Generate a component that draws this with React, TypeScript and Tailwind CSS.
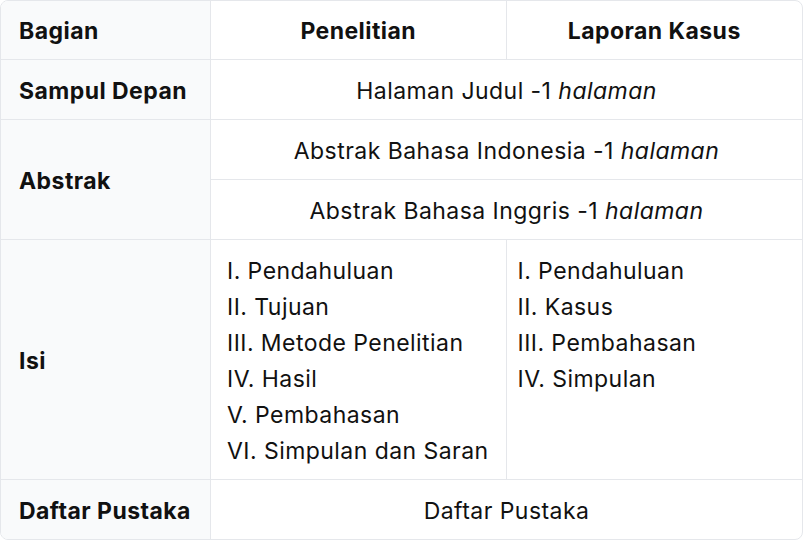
export default function App() {
  const penelitian = [
    "I. Pendahuluan",
    "II. Tujuan",
    "III. Metode Penelitian",
    "IV. Hasil",
    "V. Pembahasan",
    "VI. Simpulan dan Saran",
  ];
  const kasus = ["I. Pendahuluan", "II. Kasus", "III. Pembahasan", "IV. Simpulan"];

  const head = "bg-[#f9fafb] font-bold px-[18px] pt-[2px] flex items-center border-r border-b border-[#e5e7eb]";
  const cell = "border-b border-[#e5e7eb] flex items-center justify-center h-[60px] pt-[2px]";

  return (
    <div
      className="w-[803px] h-[540px] bg-white text-[23px] leading-[36px] tracking-[0.45px] text-[#111111]"
      style={{ fontFamily: "Inter, 'Noto Sans', sans-serif" }}
    >
      <div className="h-full border border-[#e5e7eb] rounded-lg overflow-hidden grid grid-cols-[210px_1fr_1fr] grid-rows-[59px_60px_120px_240px_1fr]">
        {/* HEADER */}
        <div className={head}>Bagian</div>
        <div className="border-r border-b border-[#e5e7eb] font-bold pt-[2px] flex items-center justify-center">
          Penelitian
        </div>
        <div className="border-b border-[#e5e7eb] font-bold pt-[2px] flex items-center justify-center">
          Laporan Kasus
        </div>

        {/* SAMPUL */}
        <div className={head}>Sampul Depan</div>
        <div className={`${cell} col-span-2`}>
          Halaman Judul -1&nbsp;<em>halaman</em>
        </div>

        {/* ABSTRAK */}
        <div className={head}>Abstrak</div>
        <div className="col-span-2 flex flex-col">
          <div className={cell}>
            Abstrak Bahasa Indonesia -1&nbsp;<em>halaman</em>
          </div>
          <div className={cell}>
            Abstrak Bahasa Inggris -1&nbsp;<em>halaman</em>
          </div>
        </div>

        {/* ISI */}
        <div className={head}>Isi</div>
        <div className="border-r border-b border-[#e5e7eb] pl-[16px] pt-[13px]">
          {penelitian.map((p) => (
            <div key={p}>{p}</div>
          ))}
        </div>
        <div className="border-b border-[#e5e7eb] pl-[11px] pt-[13px]">
          {kasus.map((k) => (
            <div key={k}>{k}</div>
          ))}
        </div>

        {/* DAFTAR PUSTAKA */}
        <div className="bg-[#f9fafb] font-bold px-[18px] pt-[2px] flex items-center border-r border-[#e5e7eb]">
          Daftar Pustaka
        </div>
        <div className="col-span-2 pt-[2px] flex items-center justify-center">Daftar Pustaka</div>
      </div>
    </div>
  );
}
